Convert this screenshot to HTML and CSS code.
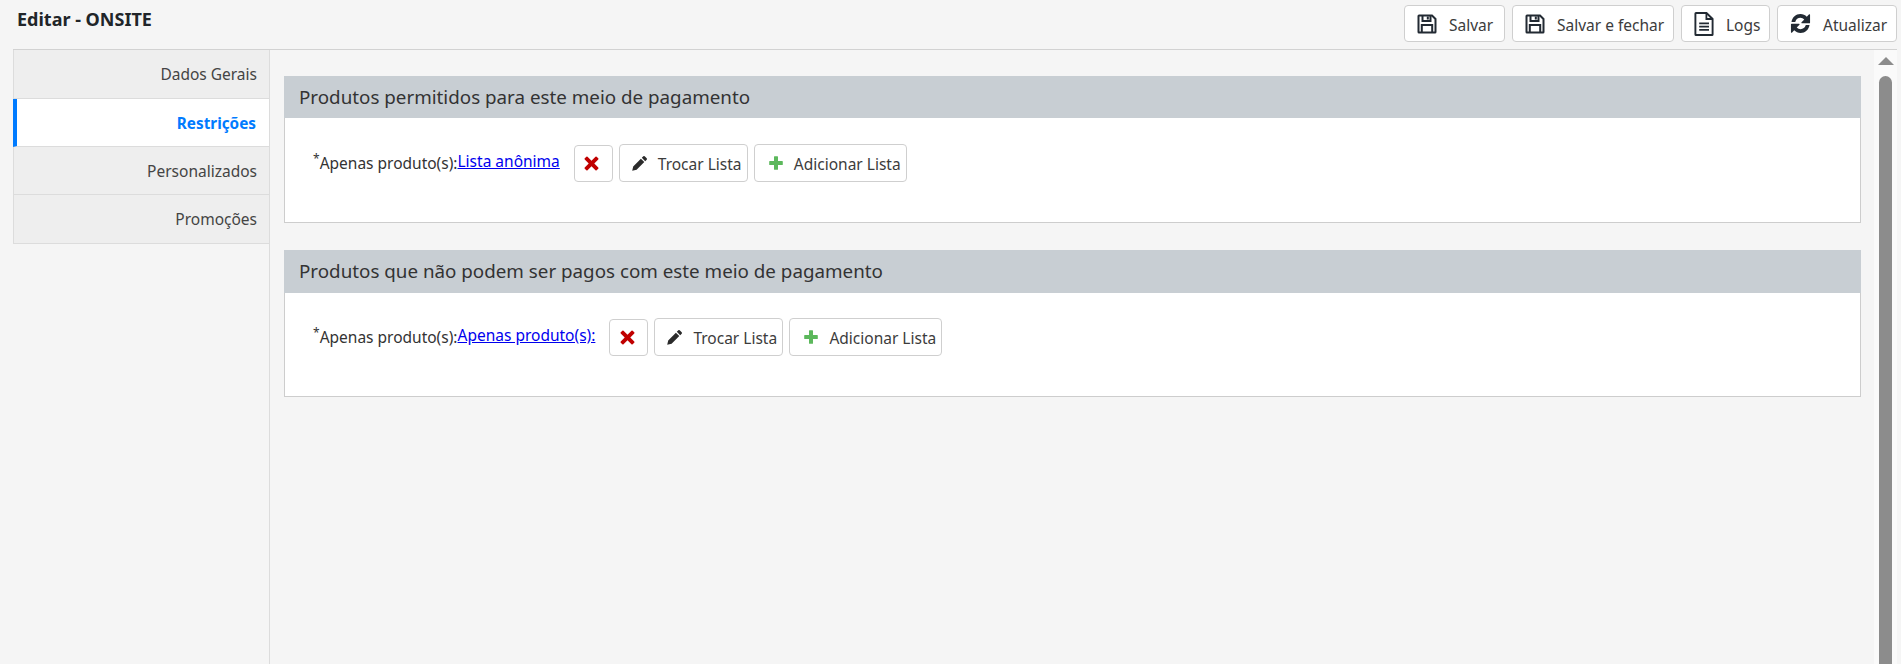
FILE: index.html
```html
<!DOCTYPE html>
<html lang="pt-BR">
<head>
<meta charset="utf-8">
<title>Editar - ONSITE</title>
<link rel="stylesheet" href="styles.css">
</head>
<body>
<svg class="defs" width="0" height="0" aria-hidden="true">
  <symbol id="i-save" viewBox="0 0 20 20">
    <path d="M2 1.500h13l3.500 3.500v13a.5.5 0 0 1-.5.500H2a.5.5 0 0 1-.5-.5V2a.5.5 0 0 1 .5-.5z" fill="none" stroke="currentColor" stroke-width="2"/>
    <path d="M5.500 1.500v5.500h8V1.500M4.800 18.500v-7.500h10.400v7.500" fill="none" stroke="currentColor" stroke-width="2"/>
    <path d="M9.800 2.500h2v3h-2z" fill="currentColor"/>
  </symbol>
  <symbol id="i-file" viewBox="0 0 20 24">
    <path d="M2 1h10.500L18.600 7v15.400a.6.6 0 0 1-.6.6H2a.6.6 0 0 1-.6-.6V1.600A.6.6 0 0 1 2 1z" fill="none" stroke="currentColor" stroke-width="1.900"/>
    <path d="M12.400 1.200V7h6M5.200 11.400h9.800M5.200 14.600h9.800M5.200 17.800h9.800" fill="none" stroke="currentColor" stroke-width="1.800"/>
  </symbol>
  <symbol id="i-refresh" viewBox="0 0 20 20">
    <path d="M1.400 8.600C2.200 4 5.600 1 9.900 1c2.400 0 4.600 1 6.100 2.500L18 1.500a.6.6 0 0 1 1.100.4v7.300a.6.6 0 0 1-.6.600h-7.100a.6.6 0 0 1-.4-1l2.600-2.600a5 5 0 0 0-3.700-1.600C7.600 4.600 5.700 6 5.100 8.300a.4.4 0 0 1-.4.300H1.800a.4.4 0 0 1-.4 0z" fill="currentColor"/>
    <path d="M18.600 11.400C17.800 16 14.400 19 10.100 19c-2.400 0-4.600-1-6.100-2.500l-2 2a.6.6 0 0 1-1.100-.4v-7.300a.6.6 0 0 1 .6-.6h7.100a.6.6 0 0 1 .4 1l-2.600 2.600a5 5 0 0 0 3.700 1.600c2.300 0 4.200-1.400 4.800-3.700a.4.4 0 0 1 .4-.3h2.900a.4.4 0 0 1 .4 0z" fill="currentColor"/>
  </symbol>
  <symbol id="i-pencil" viewBox="0 0 16 16">
    <path d="M11.300 1.300a1 1 0 0 1 1.400 0l2 2a1 1 0 0 1 0 1.400l-1.500 1.500-3.400-3.400zM8.900 3.700l3.400 3.400-7.700 7.700-4.400 1 1-4.400z" fill="currentColor"/>
  </symbol>
  <symbol id="i-plus" viewBox="0 0 14 14">
    <path d="M5 .8a.6.6 0 0 1 .6-.6h2.800a.6.6 0 0 1 .6.6V5h4.200a.6.6 0 0 1 .6.600v2.800a.6.6 0 0 1-.6.600H9v4.200a.6.600 0 0 1-.6.600H5.600a.6.600 0 0 1-.6-.600V9H.800a.6.600 0 0 1-.6-.600V5.600A.6.600 0 0 1 .800 5H5z" fill="currentColor"/>
  </symbol>
  <symbol id="i-times" viewBox="0 0 14 14">
    <path d="M3.300.7 7 4.400 10.700.7a.8.8 0 0 1 1.100 0l1.500 1.500a.8.8 0 0 1 0 1.100L9.600 7l3.700 3.700a.8.8 0 0 1 0 1.100l-1.500 1.500a.8.8 0 0 1-1.100 0L7 9.600l-3.700 3.700a.8.8 0 0 1-1.100 0L.7 11.800a.8.8 0 0 1 0-1.100L4.400 7 .7 3.300a.8.8 0 0 1 0-1.100L2.200.7a.8.8 0 0 1 1.100 0z" fill="currentColor"/>
  </symbol>
</svg>

<div class="app">
  <header class="topbar">
    <h1 class="page-title">Editar - ONSITE</h1>
    <div class="actions">
      <button class="btn btn-top btn-save"><svg class="ico ico-save"><use href="#i-save"/></svg><span class="btn-text">Salvar</span></button>
      <button class="btn btn-top btn-save-close"><svg class="ico ico-save"><use href="#i-save"/></svg><span class="btn-text">Salvar e fechar</span></button>
      <button class="btn btn-top btn-logs"><svg class="ico ico-file"><use href="#i-file"/></svg><span class="btn-text">Logs</span></button>
      <button class="btn btn-top btn-refresh"><svg class="ico ico-refresh"><use href="#i-refresh"/></svg><span class="btn-text">Atualizar</span></button>
    </div>
  </header>

  <div class="workspace">
    <nav class="tabs">
      <a class="tab tab-first">Dados Gerais</a>
      <a class="tab tab-active">Restrições</a>
      <a class="tab">Personalizados</a>
      <a class="tab tab-last">Promoções</a>
    </nav>

    <main class="content">
      <div class="panels">
        <section class="panel">
          <h2 class="panel-head">Produtos permitidos para este meio de pagamento</h2>
          <div class="panel-body">
            <span class="field-label"><sup class="req">*</sup>Apenas produto(s):</span><a class="list-link" href="#">Lista anônima</a>
            <div class="row-btns">
              <button class="btn btn-icon"><svg class="ico-times"><use href="#i-times"/></svg></button>
              <button class="btn btn-row btn-swap"><svg class="ico-pencil"><use href="#i-pencil"/></svg><span class="btn-text">Trocar Lista</span></button>
              <button class="btn btn-row btn-add"><svg class="ico-plus"><use href="#i-plus"/></svg><span class="btn-text">Adicionar Lista</span></button>
            </div>
          </div>
        </section>
        <section class="panel">
          <h2 class="panel-head">Produtos que não podem ser pagos com este meio de pagamento</h2>
          <div class="panel-body">
            <span class="field-label"><sup class="req">*</sup>Apenas produto(s):</span><a class="list-link" href="#">Apenas produto(s):</a>
            <div class="row-btns">
              <button class="btn btn-icon"><svg class="ico-times"><use href="#i-times"/></svg></button>
              <button class="btn btn-row btn-swap"><svg class="ico-pencil"><use href="#i-pencil"/></svg><span class="btn-text">Trocar Lista</span></button>
              <button class="btn btn-row btn-add"><svg class="ico-plus"><use href="#i-plus"/></svg><span class="btn-text">Adicionar Lista</span></button>
            </div>
          </div>
        </section>
      </div>
      <div class="scrollbar">
        <span class="scroll-arrow"></span>
        <span class="scroll-thumb"></span>
      </div>
    </main>
  </div>
</div>
</body>
</html>
```

FILE: styles.css
```css
* { box-sizing: border-box; }
html, body { margin: 0; height: 100%; overflow: hidden; }
body {
  background: #f5f5f5;
  color: #3c3c3c;
  font-family: "Noto Sans", "Open Sans", sans-serif;
  font-size: 15.5px;
}
.defs { position: absolute; }
.app { height: 100vh; display: flex; flex-direction: column; padding: 0 4px 0 13px; }

.topbar { height: 50px; flex: none; display: flex; justify-content: space-between; border-bottom: 1px solid #d2d2d2; }
.page-title { margin: 9px 0 0 4px; font-size: 18px; line-height: 20px; font-weight: 700; color: #212529; }
.actions { display: flex; gap: 7px; padding-top: 5px; }

.btn {
  font: inherit;
  color: #3c3c3c;
  background: #fff;
  border: 1px solid #cfcfcf;
  border-radius: 4px;
  display: inline-flex;
  align-items: center;
  padding: 0;
  white-space: nowrap;
}
.btn-text { margin-top: 2px; }
.btn-top { height: 37px; padding-left: 12px; }
.btn-save { width: 101px; }
.btn-save-close { width: 162px; }
.btn-logs { width: 89px; }
.btn-refresh { width: 120px; }
.ico { color: #222a33; flex: none; margin-right: 12px; }
.ico-save { width: 20px; height: 20px; }
.ico-file { width: 20px; height: 24px; }
.ico-refresh { width: 21px; height: 21px; margin-right: 12px; }

.workspace { flex: 1; display: flex; min-height: 0; }
.tabs { width: 257px; flex: none; border-right: 1px solid #dcdcdc; display: flex; flex-direction: column; }
.tab {
  height: 48px;
  flex: none;
  display: flex;
  align-items: center;
  justify-content: flex-end;
  padding-right: 12px;
  background: #eee;
  border-bottom: 1px solid #dcdcdc;
  border-left: 1px solid #dcdcdc;
  color: #444;
}
.tab-first, .tab-last { height: 49px; }
.tab-active {
  background: #fff;
  color: #007bff;
  font-weight: 700;
  font-size: 15.3px;
  border-left: 4px solid #007bff;
  margin-right: -1px;
  padding-right: 13px;
  border-right: 1px solid #dcdcdc;
}

.content { flex: 1; display: flex; min-width: 0; }
.panels { flex: 1; padding: 25.6px 13px 0 14px; display: flex; flex-direction: column; gap: 27.4px; }
.panel { height: 147px; flex: none; background: #fff; border: 1px solid #cdcdcd; border-top: 0; }
.panel-head {
  margin: 0 -1px;
  height: 42.6px;
  background: #c8ced3;
  font-size: 18.8px;
  line-height: 42px;
  font-weight: 400;
  padding-left: 15px;
  color: #333;
}
.panel-body { display: flex; align-items: flex-start; padding: 25.4px 0 0 28px; }
.field-label { margin-top: 8px; color: #333; line-height: 22px; }
.req { font-size: 12px; line-height: 0; }
.list-link { margin-top: 6px; line-height: 22px; color: #0000ee; text-decoration: underline; }
.row-btns { display: flex; gap: 6px; margin-left: 14px; }
.btn-icon { width: 39px; height: 37px; justify-content: center; padding-right: 3px; margin-top: 1px; }
.btn-row { height: 38px; padding-left: 12px; }
.btn-swap { width: 129px; }
.btn-add { width: 153px; }
.ico-times { width: 15px; height: 15px; color: #c00000; }
.ico-pencil { width: 16px; height: 16px; margin-right: 10px; color: #2b2b2b; }
.ico-plus { width: 14px; height: 14px; margin: 0 11px 0 2px; color: #5cb85c; }

.scrollbar { width: 23px; flex: none; background: #fafafa; display: flex; flex-direction: column; align-items: center; padding-top: 7px; }
.scroll-arrow { width: 0; height: 0; border-left: 8px solid transparent; border-right: 8px solid transparent; border-bottom: 8px solid #8c8c8c; flex: none; }
.scroll-thumb { width: 13px; flex: 1; margin-top: 11px; background: #8c8c8c; border-radius: 7px 7px 0 0; }
```
